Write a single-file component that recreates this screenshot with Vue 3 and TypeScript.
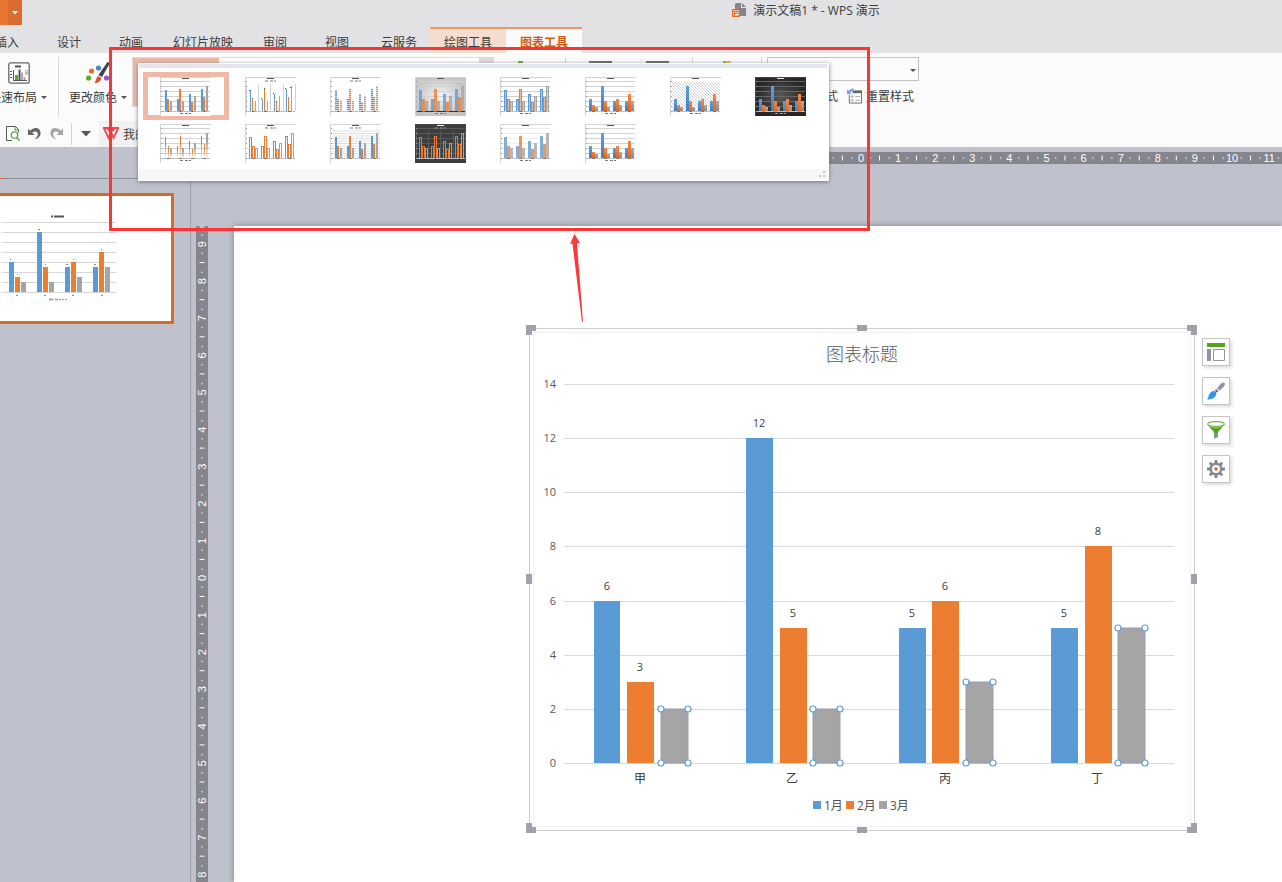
<script setup lang="ts">
import { ref } from 'vue'

interface Tab { name: string; kind?: 'context' | 'active' }
type Fill = 'solid' | 'striped' | 'outline' | 'fade' | 'soft' | 'edge' | 'gradient'
interface Preset { id: number; set: 'a' | 'b'; fill: Fill; back: 'white' | 'silver' | 'dark' | 'night' | 'hatch'; grid: 'rows' | 'cols' | 'none' | 'both' | 'dense' | 'faint'; legend: 'top' | 'bottom'; thin?: boolean }

const tabs: Tab[] = [
  { name: '插入' }, { name: '设计' }, { name: '动画' }, { name: '幻灯片放映' }, { name: '审阅' },
  { name: '视图' }, { name: '云服务' }, { name: '绘图工具', kind: 'context' }, { name: '图表工具', kind: 'active' },
]

const categories = ['甲', '乙', '丙', '丁']
const seriesNames = ['1月', '2月', '3月']
const colors = ['#5b9bd5', '#ed7d31', '#a5a5a5']
const values = [[6, 3, 2], [12, 5, 2], [5, 6, 3], [5, 8, 5]]
const ticks = [14, 12, 10, 8, 6, 4, 2, 0]
const base = 435
const unit = 27.07
const bars = values.flatMap((row, c) => row.map((v, s) => ({
  key: `${c}-${s}`, v, s, x: Math.floor(65 + c * 152.5 + s * 33.5), y: Math.round(base - v * unit), h: Math.round(v * unit),
})))
const miniBars = values.flatMap((row, c) => row.map((v, s) => ({
  key: `${c}-${s}`, s, x: 9 + c * 28 + s * 6, y: 97 - v * 5, h: v * 5,
})))

const heights = {
  a: [[21, 12, 10], [12, 22, 10], [17, 9, 15], [22, 14, 25]],
  b: [[12, 6, 4], [25, 10, 4], [10, 12, 6], [10, 17, 10]],
}
const presets: Preset[] = [
  { id: 1, set: 'a', fill: 'solid', back: 'white', grid: 'rows', legend: 'bottom' },
  { id: 2, set: 'a', fill: 'solid', back: 'white', grid: 'cols', legend: 'top', thin: true },
  { id: 3, set: 'a', fill: 'striped', back: 'white', grid: 'none', legend: 'top' },
  { id: 4, set: 'a', fill: 'soft', back: 'silver', grid: 'rows', legend: 'bottom' },
  { id: 5, set: 'a', fill: 'edge', back: 'white', grid: 'rows', legend: 'bottom' },
  { id: 6, set: 'b', fill: 'gradient', back: 'white', grid: 'rows', legend: 'bottom' },
  { id: 7, set: 'b', fill: 'gradient', back: 'hatch', grid: 'none', legend: 'bottom' },
  { id: 8, set: 'b', fill: 'gradient', back: 'night', grid: 'rows', legend: 'bottom' },
  { id: 9, set: 'a', fill: 'fade', back: 'white', grid: 'rows', legend: 'bottom', thin: true },
  { id: 10, set: 'a', fill: 'outline', back: 'white', grid: 'none', legend: 'top' },
  { id: 11, set: 'a', fill: 'solid', back: 'white', grid: 'dense', legend: 'top' },
  { id: 12, set: 'a', fill: 'outline', back: 'dark', grid: 'both', legend: 'top' },
  { id: 13, set: 'a', fill: 'soft', back: 'white', grid: 'faint', legend: 'bottom' },
  { id: 14, set: 'b', fill: 'gradient', back: 'white', grid: 'rows', legend: 'bottom' },
]
const selected = ref(1)

function presetBars(p: Preset) {
  const lined = p.fill === 'outline' || p.fill === 'edge'
  const wide = p.fill === 'soft' || p.fill === 'gradient'
  const w = p.thin ? 1 : wide ? 3 : 2
  const offsets = lined ? [4.5, 7.5, 10.5] : wide ? [4, 7, 10] : p.fill === 'fade' ? [5, 8, 10] : [5, 7, 10]
  return heights[p.set].flatMap((row, c) => row.map((h, s) => ({
    key: `${c}-${s}`, s, h, w: p.thin && p.fill === 'fade' && s === 2 ? 2 : w, x: offsets[s] + c * 12, y: 34 - h + (lined ? 0.5 : 0),
  })))
}
function rowLines(p: Preset): number[] {
  if (p.grid === 'dense') return [7, 9.5, 12, 14.5, 17, 19.5, 22, 24.5, 27, 29.5, 32]
  if (p.grid === 'rows' || p.grid === 'both' || p.grid === 'faint') return [4.5, 9.5, 14.5, 19.5, 24.5, 29.5]
  return []
}
function fillOf(p: Preset, s: number): string {
  if (p.fill === 'outline') return 'none'
  if (p.fill === 'striped') return `url(#stripe${s})`
  if (p.fill === 'fade') return `url(#fade${s})`
  if (p.fill === 'gradient') return `url(#deep${s})`
  return colors[s]
}

const step = 37.1
const across = Array.from({ length: 22 }, (_, i) => i - 10).map(n => ({ n: Math.abs(n), p: 627 + n * step }))
const down = Array.from({ length: 18 }, (_, i) => i - 9).map(n => ({ n: Math.abs(n), p: 352 + n * step }))
</script>

<template>
  <div class="app">
    <header class="titlebar">
      <button class="app-menu" aria-label="应用菜单">
        <svg width="6" height="4" viewBox="0 0 6 4"><path d="M0 0h6L3 3.5z" fill="#fff" /></svg>
      </button>
      <h1 class="doc-title">
        <svg width="15" height="15" viewBox="0 0 15 15">
          <path d="M4 0h5v5h5v8H8V6H3V1z" fill="#858585" /><path d="M10 0l4 4h-4z" fill="#858585" />
          <rect x="0.750" y="6.750" width="6.500" height="6.500" fill="#fff" stroke="#e8692a" stroke-width="1.500" />
          <path d="M2.500 12V8.500h3v2h-3" fill="none" stroke="#e8692a" />
        </svg>
        <span>演示文稿1 * - WPS 演示</span>
      </h1>
    </header>

    <nav class="tabs">
      <button v-for="t in tabs" :key="t.name" class="tab" :class="t.kind">{{ t.name }}</button>
    </nav>

    <section class="ribbon">
      <div class="groups">
        <button class="big layout">
          <svg width="22" height="22" viewBox="0 0 22 22">
            <rect x="0.800" y="0.800" width="20.400" height="20.400" rx="2" fill="#fff" stroke="#666" stroke-width="1.300" />
            <path d="M7 4.500h6" stroke="#555" stroke-width="2" />
            <path d="M2 9.500h2M2 12.500h2M2 15.500h2M5.500 8v10.500H19" stroke="#555" fill="none" />
            <path d="M8.500 18v-5" stroke="#5aa82f" stroke-width="3" /><path d="M11.500 18V7.500" stroke="#555" stroke-width="2" />
            <path d="M14 18v-7.500" stroke="#aaa" stroke-width="2" /><path d="M16.500 18v-3" stroke="#aaa" stroke-width="2" />
            <path d="M17.500 8.500h2v2h-2zM17.500 10.500h2v2h-2z" stroke="#aaa" fill="none" stroke-width=".8" />
          </svg>
          <span class="caption">快速布局<i class="caret"></i></span>
        </button>
        <button class="big palette">
          <svg width="24" height="22" viewBox="0 0 24 22">
            <circle cx="5.500" cy="9" r="2.600" fill="#ee6b22" /><circle cx="12.500" cy="6" r="2.600" fill="#527fd0" />
            <circle cx="2.600" cy="16" r="2.600" fill="#58ad22" /><circle cx="20.500" cy="16" r="2.600" fill="#8c5ac8" />
            <path d="M21.500 0L24 1l-8 14-3.500-2z" fill="#3f424a" /><path d="M12 14l3.500 2c-1 3.500-3 5-7 5 1-1 2-6 3.500-7z" fill="#d9552b" />
          </svg>
          <span class="caption">更改颜色<i class="caret"></i></span>
        </button>
        <div class="strip"><div class="strip-current"></div><div class="strip-scroll"></div></div>
        <div class="hidden-group one"><i class="peek green"></i></div>
        <div class="hidden-group two"><i class="peek dark"></i><i class="peek dark"></i></div>
        <div class="hidden-group three"><i class="peek mixed"></i></div>
        <div class="format">
          <label class="picker">
            <select aria-label="图表元素"><option>系列 3月</option></select>
            <i class="caret"></i>
          </label>
          <div class="format-row">
            <button class="small first">设置格式</button>
            <button class="small">
              <svg width="15" height="16" viewBox="0 0 16 16">
                <path d="M2.500 7v8.500h13V3" fill="#fff" stroke="#686868" /><path d="M6 2h10v3H6z" fill="#686868" />
                <path d="M4 8.500h3M4 12.500h3M9 8.500h5M9 12.500h5M5.500 7v3M5.500 11v3" stroke="#aaa" />
                <path d="M0 1v5h5L3.500 4.500C4.500 3 6 2.500 7.500 2.500L7 0C4.500 0 3 1 2 2.500z" fill="#7b9ff0" />
              </svg>
              重置样式
            </button>
          </div>
        </div>
      </div>

      <div class="quick">
        <button class="q preview" aria-label="打印预览">
          <svg width="15" height="16" viewBox="0 0 15 16">
            <path d="M6 14.500H.500V.500h9l3 3v3" fill="#fff" stroke="#555" /><path d="M9 .500v3.500h3.500" fill="none" stroke="#777" />
            <circle cx="8.500" cy="9" r="3.200" fill="#fff" stroke="#5aa83a" stroke-width="1.300" /><path d="M10.500 11.500l3 3" stroke="#5aa83a" stroke-width="1.600" />
          </svg>
        </button>
        <button class="q undo" aria-label="撤销">
          <svg width="13" height="13" viewBox="0 0 13 13"><path d="M0 1.500v6.500h6.500L4.200 5.800C7 3.500 9.800 4.500 9.800 7c0 2-1 3.500-3.300 5.500C10.500 11.500 12.600 9 12.600 6 12.600 1 6.500-1 2.200 3.700z" fill="#666" /></svg>
        </button>
        <button class="q redo" aria-label="恢复">
          <svg width="13" height="13" viewBox="0 0 13 13"><path d="M13 1.500v6.500H6.500l2.300-2.200C6 3.500 3.200 4.500 3.200 7c0 2 1 3.500 3.300 5.500C2.500 11.500.400 9 .400 6 .400 1 6.500-1 10.800 3.700z" fill="#a5a5a5" /></svg>
        </button>
        <button class="q more" aria-label="更多">
          <svg width="10" height="6" viewBox="0 0 10 6"><path d="M0 0h10L5 5.500z" fill="#555" /></svg>
        </button>
        <button class="doc-tab">
          <svg width="16" height="13" viewBox="0 0 16 13"><path d="M0 1h16M1 1.500L5.500 11 8 5l2.500 6L15 1.500M4 1.500h8L8 5z" fill="none" stroke="#f04a50" stroke-width="1.800" /></svg>
          <span>我的WPS</span>
        </button>
      </div>
    </section>

    <main class="work">
      <aside class="pane">
        <div class="pane-head"></div>
        <button class="slide-thumb" aria-label="幻灯片 1">
          <svg width="171" height="125" viewBox="0 0 171 125">
            <path v-for="n in 8" :key="n" :d="`M0 ${n * 10 + 16.5}h1M3 ${n * 10 + 16.5}h113`" stroke="#d6d6d6" />
            <rect v-for="b in miniBars" :key="b.key" :x="b.x" :y="b.y - 1" width="5" :height="b.h" :fill="colors[b.s]" />
            <path d="M51 20.500h2M54 20.500h10" stroke="#555" stroke-width="2" />
            <path d="M10 63.500h1M38 33.500h2M17 78.500h1M45 68.500h1M66 68.500h2M73 63.500h1M94 68.500h2M101 53.500h1M16 99.500h2M44 99.500h2M72 99.500h2M101 99.500h2" stroke="#888" />
            <path d="M49 103.500h3" stroke="#7ab0e5" stroke-width="2" /><path d="M55 103.500h3" stroke="#efa270" stroke-width="2" /><path d="M52 103.500h2M59 103.500h8" stroke="#999" stroke-dasharray="2 1" />
          </svg>
        </button>
      </aside>

      <div class="stage">
        <svg class="ruler-top" height="12" aria-hidden="true">
          <g v-for="m in across" :key="m.p">
            <text :x="m.p" y="10" class="mark">{{ m.n }}</text>
            <path :d="`M${m.p + 8.5} 6h1.500M${m.p + 18.5} 3.500v5M${m.p + 27.5} 6h1.500`" class="dash" />
          </g>
        </svg>
        <div class="desk">
          <svg class="ruler-side" width="12" aria-hidden="true">
            <path d="M3.500 1h5M6 8.500v1.500" class="dash" />
            <g v-for="m in down" :key="m.p">
              <text class="mark" :transform="`translate(10 ${m.p}) rotate(-90)`">{{ m.n }}</text>
              <path :d="`M6 ${m.p + 8.5}v1.500M3.500 ${m.p + 18.5}h5M6 ${m.p + 27.5}v1.500`" class="dash" />
            </g>
          </svg>
          <div class="slide">
            <svg class="chart" width="666" height="503" viewBox="0 0 666 503" role="img" aria-label="图表标题">
              <rect x="0.500" y="0.500" width="665" height="502" fill="#fff" stroke="#cbccd0" />
              <rect x="4.500" y="4.500" width="657" height="494" fill="none" stroke="#f1f1f3" />
              <text x="333" y="33" class="heading">图表标题</text>
              <g v-for="(t, i) in ticks" :key="t">
                <path :d="`M35 ${Math.round(56 + i * 54.14) + 0.5}h610`" stroke="#d9d9d9" />
                <text x="27" :y="Math.round(60 + i * 54.14)" class="axis">{{ t }}</text>
              </g>
              <g v-for="b in bars" :key="b.key">
                <rect :x="b.x" :y="b.y" :width="b.s === 0 && b.x < 100 ? 26 : 27" :height="b.h" :fill="colors[b.s]" :class="{ picked: b.s === 2 }" />
                <text v-if="b.s < 2" :x="b.x + 13" :y="b.y - 11" class="value">{{ b.v }}</text>
                <g v-else class="knobs">
                  <circle :cx="b.x" :cy="b.y" r="3" /><circle :cx="b.x + 27" :cy="b.y" r="3" />
                  <circle :cx="b.x" :cy="base" r="3" /><circle :cx="b.x + 27" :cy="base" r="3" />
                </g>
              </g>
              <text v-for="(c, i) in categories" :key="c" :x="Math.floor(111 + i * 152.5)" y="455" class="category">{{ c }}</text>
              <g v-for="(s, i) in seriesNames" :key="s">
                <rect :x="284 + i * 33" y="473" width="8" height="8" :fill="colors[i]" />
                <text :x="295 + i * 33" y="482" class="legend">{{ s }}</text>
              </g>
              <g fill="#9fa1ab">
                <path d="M-3-3H7V3H3V7H-3zM658-3h10V7h-6V3h-4zM-3 495h6v4h4v6H-3zM662 495h6v10h-10v-6h4z" />
                <path d="M328-3h10v6h-10zM328 499h10v6h-10zM-3 246h6v10h-6zM662 246h6v10h-6z" />
              </g>
            </svg>
            <div class="chart-tools">
              <button aria-label="图表元素">
                <svg width="18" height="18" viewBox="0 0 18 18"><path d="M0 0h18v4H0z" fill="#55a51c" /><path d="M0 6h4v12H0z" fill="#9295a1" /><path d="M6.500 6.500h11v11h-11z" fill="#fff" stroke="#9295a1" /></svg>
              </button>
              <button aria-label="图表样式">
                <svg width="18" height="18" viewBox="0 0 18 18"><path d="M17.500 1c1 1 0 3-1 4l-4 3.500-2.500-2L13.500 2C15 .500 17 0 17.500 1z" fill="#9295a1" /><path d="M9 7l2.500 2-1.500 1.500L8 8.500z" fill="#62656e" /><path d="M7 9c2 0 3 2 2 4-1.500 3.500-5 4.500-9 4.500 2-2 1-3 2.500-5.500C3.500 10 5 9 7 9z" fill="#2f94f3" /></svg>
              </button>
              <button aria-label="图表筛选器">
                <svg width="18" height="18" viewBox="0 0 18 18"><path d="M0 3.500L7 11v1h4v-1l7-7.500c-3 4-15 4-18 0z" fill="#55a51c" /><ellipse cx="9" cy="3" rx="8.500" ry="2.400" fill="#fff" stroke="#55a51c" /><path d="M7 12h4v4l-3 1.500H7z" fill="#8b8e99" /></svg>
              </button>
              <button aria-label="设置">
                <svg width="18" height="18" viewBox="0 0 18 18"><path d="M9 0v18M0 9h18M2.800 2.800l12.400 12.400M15.200 2.800L2.800 15.200" stroke="#858894" stroke-width="3" /><circle cx="9" cy="9" r="5.300" fill="#fff" stroke="#858894" stroke-width="2.400" /><circle cx="9" cy="9" r="1.700" fill="#f05a22" /></svg>
              </button>
            </div>
          </div>
        </div>
      </div>
    </main>

    <section class="gallery" aria-label="图表样式库">
      <div class="gallery-head"></div>
      <div class="gallery-grid">
        <button v-for="p in presets" :key="p.id" class="preset" :class="{ selected: selected === p.id }" :aria-label="`样式 ${p.id}`" @click="selected = p.id">
          <svg width="51" height="39" viewBox="0 0 51 39" :class="p.back">
            <rect width="51" height="39" class="paper" />
            <rect v-if="p.back === 'hatch'" x="2" y="5" width="48" height="29" fill="url(#hatch)" />
            <path d="M.500 39V.500H51" fill="none" class="edge-line" />
            <path v-for="y in rowLines(p)" :key="y" :d="`M2 ${y}h48`" class="row-line" :class="p.grid" />
            <path v-if="p.grid === 'cols' || p.grid === 'both'" d="M1.500 7v27M13.500 7v27M25.500 7v27M38.500 7v27M50.500 7v27" class="row-line" :class="p.grid" fill="none" />
            <rect v-for="b in presetBars(p)" :key="b.key" :x="b.x" :y="b.y" :width="b.w" :height="b.h" :fill="fillOf(p, b.s)" :stroke="p.fill === 'outline' || p.fill === 'edge' ? colors[b.s] : 'none'" :class="p.fill" />
            <path v-if="p.id === 2" d="M4 13.500h1M7 21.500h1M16 21.500h1M19 11.500h1M28 16.500h1M31 24.500h1M40 11.500h1M45 10.500h1" stroke="#555" />
            <path d="M2 34.500h48" class="base-line" />
            <path d="M1 4.500h1M1 9.500h1M1 14.500h1M1 19.500h1M1 24.500h1M1 29.500h1M1 34.500h1" stroke="#829db8" />
            <path d="M7 34.500h3M19 34.500h3M31 34.500h3M43 34.500h3" class="words" />
            <path d="M22 1.500h7" class="title-words" />
            <path v-if="p.legend === 'top'" d="M20 4h3M25 4h6" class="words" /><path v-else d="M20 36.500h4M25 36.500h6" class="words" />
          </svg>
        </button>
      </div>
      <div class="gallery-foot">
        <svg width="6" height="6" viewBox="0 0 6 6"><path d="M4 0h2v2H4zM0 4h2v2H0zM4 4h2v2H4z" fill="#c5c5c5" /></svg>
      </div>
      <svg class="defs" width="0" height="0" aria-hidden="true">
        <defs>
          <pattern v-for="(c, i) in colors" :id="`stripe${i}`" :key="c" width="4" height="2" patternUnits="userSpaceOnUse"><rect width="4" height="2" fill="#fff" /><rect width="4" height="1.400" :fill="c" /></pattern>
          <linearGradient v-for="(c, i) in colors" :id="`fade${i}`" :key="c" x1="0" y1="0" x2="0" y2="1"><stop offset=".3" :stop-color="c" /><stop offset="1" :stop-color="c" stop-opacity=".1" /></linearGradient>
          <linearGradient id="deep0" x1="0" y1="0" x2="0" y2="1"><stop stop-color="#629fdb" /><stop offset="1" stop-color="#3c7fc8" /></linearGradient>
          <linearGradient id="deep1" x1="0" y1="0" x2="0" y2="1"><stop stop-color="#f58a46" /><stop offset="1" stop-color="#ea6510" /></linearGradient>
          <linearGradient id="deep2" x1="0" y1="0" x2="0" y2="1"><stop stop-color="#adadad" /><stop offset="1" stop-color="#8c8c8c" /></linearGradient>
          <radialGradient id="night"><stop stop-color="#595959" /><stop offset="1" stop-color="#262626" /></radialGradient>
          <radialGradient id="silver"><stop stop-color="#f5f5f5" /><stop offset="1" stop-color="#c4c4c4" /></radialGradient>
          <pattern id="hatch" width="3" height="3" patternUnits="userSpaceOnUse"><path d="M0 0l3 3" stroke="#c2c2c2" stroke-width=".8" /></pattern>
        </defs>
      </svg>
    </section>

    <div class="callout"></div>
    <svg class="arrow" width="16" height="90" viewBox="0 0 16 90" aria-hidden="true"><path d="M5.500 1L1 11l2.500-.500L13 89h1L8 10.500l3-.500z" fill="#fa3a3a" /></svg>
  </div>
</template>

<style>
body { margin: 0; }
</style>

<style scoped>
.app { position: relative; display: flex; flex-direction: column; height: 100vh; overflow: hidden; background: #e2e2e4; color: #3c3c3c; font-family: "Open Sans", "Noto Sans CJK SC", sans-serif; font-size: 12px; }
button { margin: 0; padding: 0; border: 0; background: none; color: inherit; font: inherit; white-space: nowrap; }
svg { display: block; flex: none; }
.titlebar { display: flex; align-items: flex-start; height: 27px; flex: none; }
.app-menu { display: flex; justify-content: flex-end; align-items: center; box-sizing: border-box; width: 22px; height: 25px; padding-right: 4px; background: linear-gradient(90deg, #e87632 8px, #d96d30 8px); }
.doc-title { flex: 1; display: flex; justify-content: center; align-items: center; gap: 6px; height: 20px; margin: 0; padding-left: 308px; font-size: 12px; font-weight: 400; }
.tabs { display: flex; flex: none; height: 26px; margin-left: -24px; }
.tab { min-width: 62px; padding: 3px 11px 0; box-sizing: border-box; }
.context, .active { padding: 1px 14px 0; border-top: 2px solid #ee976d; background: #f4dccf; }
.active { background: #fbfbfb; color: #d25a16; font-weight: 700; }
.ribbon { flex: none; background: #fbfbfb; }
.groups { display: flex; height: 67px; align-items: flex-start; }
.big { display: flex; flex-direction: column; align-items: flex-start; gap: 5px; box-sizing: border-box; height: 64px; padding-top: 9px; }
.layout { width: 70px; margin-left: -11px; background: linear-gradient(#d8d8d8, #d8d8d8) right 4px / 1px 60px no-repeat; }
.layout svg { margin-left: 19px; }
.palette { width: 73px; padding-left: 10px; }
.palette svg { margin-left: 17px; }
.caption { display: flex; align-items: center; gap: 4px; line-height: 17px; }
.caret { display: inline-block; border: 3px solid transparent; border-top-color: #555; border-bottom: 0; }
.strip { display: flex; justify-content: space-between; width: 362px; height: 50px; margin-top: 4px; border: 1px solid #dcdcdc; box-sizing: border-box; background: #fff; }
.strip-current { width: 86px; background: #efb9a7; }
.strip-scroll { width: 14px; background: #dcdcdc; }
.hidden-group { display: flex; justify-content: center; gap: 34px; box-sizing: border-box; height: 55px; margin-top: 4px; padding-top: 4px; border-right: 1px solid #d8d8d8; }
.one { width: 72px; padding-right: 18px; }
.two { width: 127px; }
.three { width: 69px; }
.peek { height: 20px; width: 23px; background: #6a6a6a; }
.green { width: 5px; background: #65ad42; }
.mixed { width: 8px; background: linear-gradient(90deg, #77c06a 3px, #edbf42 3px); }
.format { margin: 4px 0 0 5px; }
.picker { position: relative; display: block; width: 152px; }
.picker select { appearance: none; display: block; width: 100%; height: 24px; padding: 0 4px; border: 1px solid #c3c3c3; border-radius: 0; background: #fbfbfb; color: inherit; font: inherit; }
.picker .caret { position: absolute; right: 3px; top: 12px; }
.format-row { display: flex; gap: 9px; margin-top: 6px; }
.small { display: flex; align-items: center; gap: 4px; height: 18px; }
.first { padding-left: 23px; }
.quick { display: flex; align-items: center; height: 27px; background: #fbfbfb; }
.q { display: flex; align-items: center; justify-content: center; height: 26px; }
.preview { margin-left: 6px; }
.undo { margin-left: 7px; }
.redo { margin-left: 9px; }
.more { width: 28px; margin-left: 8px; border-left: 1px solid #d3d3d3; height: 22px; }
.doc-tab { display: flex; align-items: center; gap: 4px; height: 26px; width: 120px; padding-left: 4px; background: #f1f1f2; }
.work { flex: 1; min-height: 0; display: flex; background: #bfc2cc; }
.pane { flex: none; width: 190px; border-right: 1px solid #9c9ea8; }
.pane-head { height: 32px; background: linear-gradient(90deg, #d8632a 3px, #8e9098 3px) left bottom / 100% 1px no-repeat; }
.slide-thumb { display: block; width: 174px; margin-top: 14px; border: solid #d66a26; border-width: 3px 3px 3px 0; background: #fff; }
.stage { flex: 1; min-width: 0; display: flex; flex-direction: column; }
.ruler-top { width: calc(100% - 43px); margin: 5px 0 0 43px; background: #84858d; }
.desk { flex: 1; min-height: 0; display: flex; margin-top: 62px; }
.ruler-side { height: 100%; margin-left: 5px; background: #84858d; }
.mark { fill: #fff; font-family: "Liberation Sans", sans-serif; font-size: 11px; text-anchor: middle; }
.dash { stroke: #fff; fill: none; }
.slide { position: relative; flex: 1; margin-left: 26px; background: #fff; box-shadow: 0 0 6px #7e818c; }
.chart { position: absolute; left: 295px; top: 102px; overflow: visible; }
.heading { font-size: 18px; text-anchor: middle; fill: #595959; font-weight: 300; }
.axis { font-size: 11px; text-anchor: end; fill: #595959; }
.value { font-size: 11px; text-anchor: middle; fill: #404040; }
.category { font-size: 12px; text-anchor: middle; fill: #404040; }
.legend { font-size: 12px; fill: #505050; }
.picked { stroke: #9c9db0; }
.knobs circle { fill: #fff; stroke: #60a0d8; stroke-width: 1.200; }
.chart-tools { position: absolute; left: 968px; top: 112px; display: flex; flex-direction: column; gap: 11px; }
.chart-tools button { display: flex; align-items: center; justify-content: center; box-sizing: border-box; width: 28px; height: 28px; border: 1px solid #c4c4c4; background: #fff; box-shadow: 2px 2px 3px #dedede; }
.gallery { position: absolute; left: 138px; top: 63px; width: 691px; box-sizing: border-box; padding: 1px 2px 2px 1px; background: #fff; box-shadow: 0 1px 4px #70737e; }
.gallery-head { height: 4px; background: #e3e6ee; }
.gallery-grid { display: grid; grid-template-columns: repeat(8, 85px); grid-auto-rows: 47px; padding: 4px 0 3px 4px; }
.preset { display: flex; box-sizing: border-box; width: 86px; height: 48px; padding-left: 12px; border: 5px solid transparent; }
.preset.selected { border-color: #efb9a7; }
.gallery-foot { display: flex; justify-content: flex-end; align-items: center; height: 10px; padding-right: 2px; background: #f6f6f6; }
.defs { position: absolute; }
.paper { fill: #fff; }
.silver .paper { fill: url(#silver); }
.dark .paper { fill: #3d3d3d; }
.night .paper { fill: url(#night); }
.edge-line { stroke: #d2d2d2; }
.row-line { stroke: #d2d2d2; }
.row-line.faint { stroke: #ededed; }
.row-line.dense { stroke: #dedede; }
.dark .row-line { stroke: #595959; }
.night .row-line { stroke: #666; }
.dark .edge-line, .night .edge-line { stroke: #444; }
.base-line { stroke: #c0c0c0; }
.silver .base-line { stroke: #333; }
.words { stroke: #777; stroke-dasharray: 3 1; }
.title-words { stroke: #555; }
.dark .words, .night .words { stroke: #999; }
.dark .title-words, .night .title-words { stroke: #eee; }
.soft { opacity: .8; }
.edge { fill-opacity: .5; }
.callout { position: absolute; left: 109px; top: 47px; width: 761px; height: 184px; box-sizing: border-box; border: 3px solid #fd3434; pointer-events: none; }
.arrow { position: absolute; left: 569px; top: 233px; pointer-events: none; }
</style>
